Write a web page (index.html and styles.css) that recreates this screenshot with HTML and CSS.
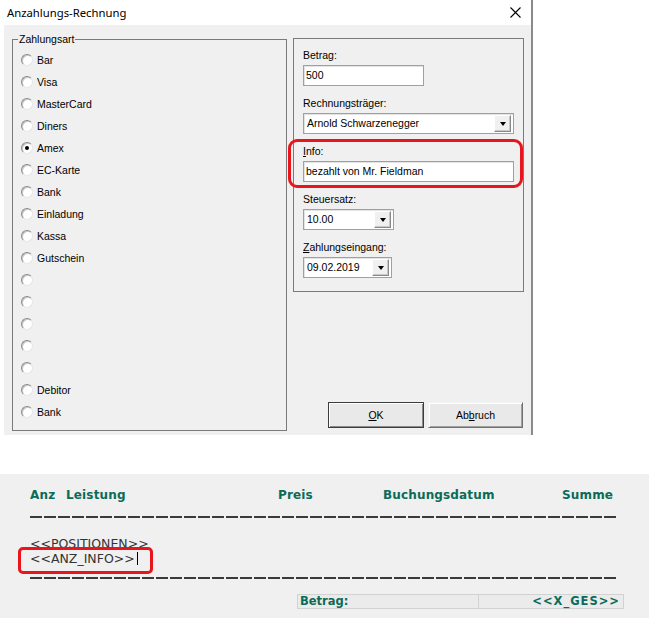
FILE: index.html
```html
<!DOCTYPE html>
<html lang="de">
<head>
<meta charset="utf-8">
<title>Anzahlungs-Rechnung</title>
<link rel="stylesheet" href="styles.css">
</head>
<body>
<div class="window">
  <div class="titlebar">
    <span class="title">Anzahlungs-Rechnung</span>
    <svg class="close" width="11" height="11" viewBox="0 0 11 11"><path d="M0.5 0.5L10.5 10.5M10.5 0.5L0.5 10.5" stroke="#000" stroke-width="1.1" fill="none"/></svg>
  </div>
  <div class="client">
    <fieldset class="paygroup">
      <legend>Zahlungsart</legend>
      <div class="options">
        <div class="opt"><span class="radio"></span><span>Bar</span></div>
        <div class="opt"><span class="radio"></span><span>Visa</span></div>
        <div class="opt"><span class="radio"></span><span>MasterCard</span></div>
        <div class="opt"><span class="radio"></span><span>Diners</span></div>
        <div class="opt"><span class="radio checked"></span><span>Amex</span></div>
        <div class="opt"><span class="radio"></span><span>EC-Karte</span></div>
        <div class="opt"><span class="radio"></span><span>Bank</span></div>
        <div class="opt"><span class="radio"></span><span>Einladung</span></div>
        <div class="opt"><span class="radio"></span><span>Kassa</span></div>
        <div class="opt"><span class="radio"></span><span>Gutschein</span></div>
        <div class="opt"><span class="radio"></span><span></span></div>
        <div class="opt"><span class="radio"></span><span></span></div>
        <div class="opt"><span class="radio"></span><span></span></div>
        <div class="opt"><span class="radio"></span><span></span></div>
        <div class="opt"><span class="radio"></span><span></span></div>
        <div class="opt"><span class="radio"></span><span>Debitor</span></div>
        <div class="opt"><span class="radio"></span><span>Bank</span></div>
      </div>
    </fieldset>
    <div class="rightcol">
      <div class="detailbox">
        <div class="field">
          <div class="lbl">Betrag:</div>
          <div class="edit w-betrag">500</div>
        </div>
        <div class="field">
          <div class="lbl">Rechnungsträger:</div>
          <div class="combo w-wide"><span class="ctext">Arnold Schwarzenegger</span><span class="cbtn"><span class="tri"></span></span></div>
        </div>
        <div class="field">
          <div class="lbl"><u>I</u>nfo:</div>
          <div class="edit w-wide">bezahlt von Mr. Fieldman</div>
        </div>
        <div class="field">
          <div class="lbl">Steuersatz:</div>
          <div class="combo w-small"><span class="ctext">10.00</span><span class="cbtn"><span class="tri"></span></span></div>
        </div>
        <div class="field">
          <div class="lbl"><u>Z</u>ahlungseingang:</div>
          <div class="combo w-date"><span class="ctext">09.02.2019</span><span class="cbtn"><span class="tri"></span></span></div>
        </div>
        <div class="redmark info-mark"></div>
      </div>
      <div class="buttons">
        <button class="btn default"><u>O</u>K</button>
        <button class="btn">Ab<u>b</u>ruch</button>
      </div>
    </div>
  </div>
</div>
<div class="report">
  <div class="cols">
    <span>Anz</span><span>Leistung</span><span>Preis</span><span>Buchungsdatum</span><span>Summe</span>
  </div>
  <div class="dash"></div>
  <div class="pos">&lt;&lt;POSITIONEN&gt;&gt;</div>
  <div class="anzline"><span class="anz">&lt;&lt;ANZ_INFO&gt;&gt;</span><span class="caret"></span></div>
  <div class="dash dash2"></div>
  <div class="total"><span class="tlabel">Betrag:</span><span class="tval">&lt;&lt;X_GES&gt;&gt;</span></div>
</div>
</body>
</html>
```

FILE: styles.css
```css
* { box-sizing: border-box; }

html, body {
  margin: 0;
  padding: 0;
  background: #ffffff;
}

body {
  width: 652px;
  height: 618px;
  overflow: hidden;
  font-family: "Liberation Sans", Arial, sans-serif;
  font-size: 10.5px;
  color: #000;
}

/* ---------- dialog ---------- */
.window {
  width: 533px;
  height: 435px;
  border-right: 2px solid #8a8a8a;
  display: flex;
  flex-direction: column;
}

.titlebar {
  height: 25px;
  display: flex;
  align-items: center;
  justify-content: space-between;
  padding: 0 10px 0 7px;
  background: #fff;
}

.title {
  font-family: "Noto Sans", "Open Sans", sans-serif;
  font-size: 11.3px;
  color: #000;
}

.close { display: block; }

.client {
  flex: 1;
  margin-left: 4px;
  background: #f0f0f0;
  display: flex;
  align-items: flex-start;
  gap: 6px;
  padding: 8px 0 0 8px;
}

.paygroup {
  margin: 0;
  padding: 0;
  width: 275px;
  height: 398px;
  border: 1px solid #7a7a7a;
}

.paygroup legend {
  margin-left: 5px;
  padding: 0 1px;
  line-height: 12px;
  font-size: 10.5px;
}

.options {
  padding: 4px 0 0 8px;
  display: flex;
  flex-direction: column;
}

.opt {
  height: 22px;
  display: flex;
  align-items: center;
  gap: 4px;
}

.radio {
  width: 12px;
  height: 12px;
  border-radius: 50%;
  background: #fff;
  border: 1px solid;
  border-color: #8a8a8a #e6e6e6 #e6e6e6 #8a8a8a;
  box-shadow: inset 1px 1px 0 #c8c8c8;
  display: flex;
  align-items: center;
  justify-content: center;
  flex: none;
}

.radio.checked::after {
  content: "";
  width: 4px;
  height: 4px;
  border-radius: 50%;
  background: #000;
}

.rightcol {
  margin-top: 5px;
  width: 231px;
  height: 391px;
  display: flex;
  flex-direction: column;
}

.detailbox {
  position: relative;
  width: 231px;
  height: 254px;
  border: 1px solid #7a7a7a;
  padding: 9px 9px 0 9px;
  display: flex;
  flex-direction: column;
  gap: 10px;
}

.field {
  display: flex;
  flex-direction: column;
}

.lbl {
  line-height: 14px;
  height: 14px;
  margin-bottom: 3px;
}

.edit, .combo {
  height: 21px;
  background: #fff;
  border: 1px solid #a0a0a0;
  box-shadow: inset 1px 1px 0 #e3e3e3;
  line-height: 19px;
  padding-left: 2px;
  white-space: nowrap;
  overflow: hidden;
}

.w-betrag { width: 121px; }
.w-wide { width: 211px; }
.w-small { width: 91px; }
.w-date { width: 89px; }

.combo {
  display: flex;
  align-items: center;
  padding: 0 1px 0 3px;
}

.ctext { flex: 1; }

.cbtn {
  width: 17px;
  height: 17px;
  background: #f0f0f0;
  border: 1px solid;
  border-color: #ffffff #8a8a8a #8a8a8a #ffffff;
  box-shadow: inset -1px -1px 0 #c8c8c8;
  display: flex;
  align-items: center;
  justify-content: center;
  margin-right: 1px;
}

.tri {
  width: 0;
  height: 0;
  border-left: 3.5px solid transparent;
  border-right: 3.5px solid transparent;
  border-top: 4px solid #000;
}

.redmark {
  position: absolute;
  border: 3px solid #e8161c;
  border-radius: 9px;
}

.info-mark {
  left: -6px;
  top: 100px;
  width: 235px;
  height: 49px;
}

.buttons {
  margin-top: auto;
  margin-bottom: 1px;
  display: flex;
  justify-content: flex-end;
  gap: 4px;
  padding-right: 1px;
}

.btn {
  font-family: "Liberation Sans", Arial, sans-serif;
  font-size: 10.5px;
  color: #000;
  height: 26px;
  width: 95px;
  background: #e9e9e9;
  border: 1px solid;
  border-color: #f4f4f4 #707070 #707070 #f4f4f4;
  box-shadow: inset 1px 1px 0 #ffffff, inset -1px -1px 0 #a0a0a0;
  padding: 0;
}

.btn.default {
  width: 96px;
  border-color: #3c3c3c;
  box-shadow: inset 1px 1px 0 #ffffff, inset -1px -1px 0 #8a8a8a;
}

/* ---------- report layout ---------- */
.report {
  margin-top: 39px;
  width: 649px;
  height: 144px;
  background: #f0f0f0;
  padding: 14px 0 0 30px;
  font-family: "DejaVu Sans", Verdana, sans-serif;
}

.cols {
  display: grid;
  grid-template-columns: 36px 212px 105px 179px auto;
  line-height: 14px;
  height: 14px;
  font-size: 12px;
  font-weight: bold;
  letter-spacing: 0.15px;
  color: #0b6b58;
}

.dash {
  margin-top: 14px;
  width: 588px;
  height: 2px;
  background: repeating-linear-gradient(90deg, #3a3a3a 0 12px, transparent 12px 14px);
}

.pos {
  margin-top: 18px;
  height: 15px;
  line-height: 15px;
  font-size: 12.5px;
  color: #333;
}

.anzline {
  height: 15px;
  line-height: 15px;
  font-size: 12.5px;
  color: #333;
  display: flex;
  align-items: center;
}

.anz {
  position: relative;
}

.anz::before {
  content: "";
  position: absolute;
  left: -12px;
  top: -4px;
  width: 129px;
  height: 21px;
  border: 3px solid #e8161c;
  border-radius: 5px;
}

.caret {
  width: 1px;
  height: 13px;
  background: #000;
  margin-left: 2px;
}

.dash2 { margin-top: 11px; }

.total {
  margin-top: 15px;
  margin-left: 267px;
  width: 327px;
  height: 15px;
  display: flex;
  border: 1px solid #d2d2d2;
  background: #ebebeb;
  font-size: 11.5px;
  font-weight: bold;
  line-height: 13px;
  color: #0b6b58;
}

.tlabel {
  width: 181px;
  padding-left: 2px;
  border-right: 1px solid #d2d2d2;
}

.tval {
  flex: 1;
  text-align: right;
  padding-right: 3px;
  letter-spacing: 1px;
}
```
